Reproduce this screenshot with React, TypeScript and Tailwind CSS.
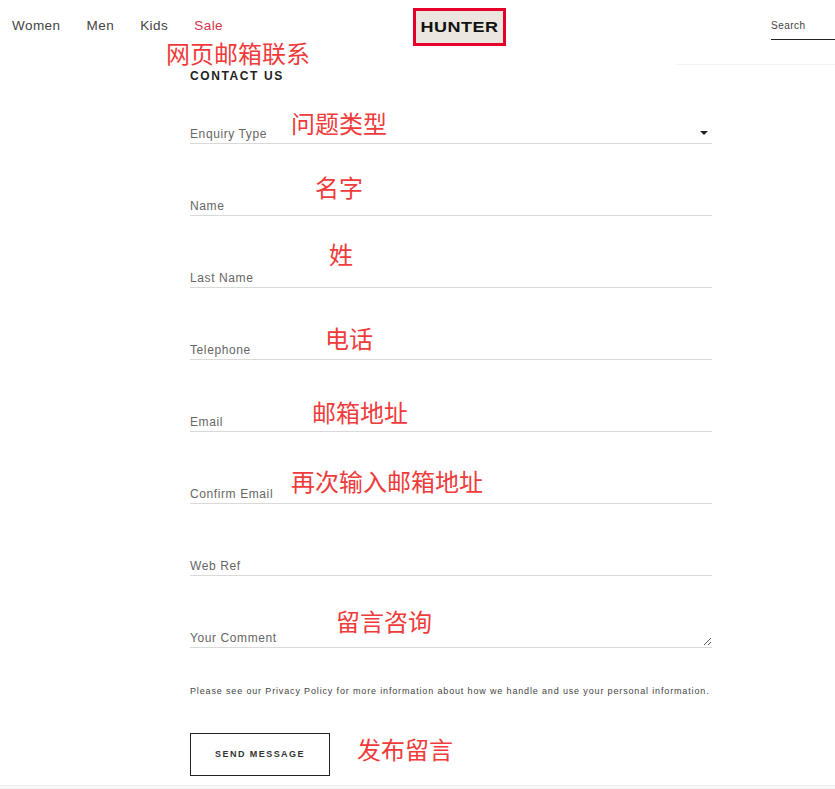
import React from 'react';

const fields = ['Enquiry Type', 'Name', 'Last Name', 'Telephone', 'Email', 'Confirm Email', 'Web Ref', 'Your Comment'];

const notes = [
  { text: '网页邮箱联系', cls: 'left-[166px] top-[39px]' },
  { text: '问题类型', cls: 'left-[291px] top-[109px]' },
  { text: '名字', cls: 'left-[315px] top-[173px]' },
  { text: '姓', cls: 'left-[329px] top-[240px]' },
  { text: '电话', cls: 'left-[325px] top-[324px]' },
  { text: '邮箱地址', cls: 'left-[312px] top-[398px]' },
  { text: '再次输入邮箱地址', cls: 'left-[291px] top-[467px]' },
  { text: '留言咨询', cls: 'left-[336px] top-[607px]' },
  { text: '发布留言', cls: 'left-[357px] top-[735px]' },
];

function Field({ label, index }: { label: string; index: number }) {
  return (
    <div className="relative flex h-[72px] items-end border-b border-[#d9d9d9] pb-[1px]">
      <span className="text-[12px] leading-[16px] tracking-[0.6px] text-[#666]">{label}</span>
      {index === 0 && (
        <div className="absolute right-[4px] bottom-[8px] h-0 w-0 border-x-[4px] border-t-[4px] border-x-transparent border-t-[#222]" />
      )}
      {index === 7 && (
        <svg className="absolute right-0 bottom-[1px]" width="9" height="9" viewBox="0 0 9 9">
          <path d="M1 8 8 1M5 8 8 5" stroke="#555" strokeWidth="1" fill="none" />
        </svg>
      )}
    </div>
  );
}

export default function App() {
  return (
    <div className="relative h-[789px] w-[835px] overflow-hidden bg-white font-['Liberation_Sans',sans-serif]">
      <header className="flex h-[64px] items-start justify-between">
        <nav className="flex gap-[26px] pt-[17px] pl-[12px] text-[13.5px] leading-[17px] tracking-[0.45px] text-[#444]">
          <a>Women</a>
          <a>Men</a>
          <a>Kids</a>
          <a className="text-[#d8334a]">Sale</a>
        </nav>
        <div className="ml-[18px] mt-[8px] flex h-[38px] w-[93px] items-center justify-center border-[3px] border-[#e4002b] bg-[#ebe6df]">
          <span className="text-[15px] font-bold tracking-[0.4px] text-[#111] [transform:scaleX(1.2)]">HUNTER</span>
        </div>
        <div className="flex h-[65px] w-[158px] flex-col items-end border-b border-[#f3f3f3]">
          <div className="mt-[14px] h-[26px] w-[64px] border-b border-[#222] pt-[5px] text-[10px] leading-[14px] tracking-[0.5px] text-[#444]">Search</div>
        </div>
      </header>

      <main className="ml-[190px] w-[522px]">
        <h1 className="mt-[5px] text-[12px] leading-[14px] font-bold tracking-[1.6px] text-[#222]">CONTACT US</h1>
        <div className="mt-[-11px]">
          {fields.map((f, i) => (
            <Field key={f} label={f} index={i} />
          ))}
        </div>
        <p className="mt-[37px] text-[9px] leading-[12px] tracking-[0.85px] whitespace-nowrap text-[#444]">
          Please see our Privacy Policy for more information about how we handle and use your personal information.
        </p>
        <button className="mt-[36px] h-[43px] w-[140px] border border-[#222] bg-white text-[9px] font-bold tracking-[1.45px] text-[#333]">
          SEND MESSAGE
        </button>
      </main>

      <div className="absolute bottom-0 left-0 h-[4px] w-full border-t border-[#eee] bg-[#f8f8f8]" />

      {notes.map((n) => (
        <span
          key={n.text}
          className={`absolute text-[24px] leading-[28px] whitespace-nowrap text-[#ef3b3b] font-['Noto_Sans_CJK_SC',sans-serif] ${n.cls}`}
        >
          {n.text}
        </span>
      ))}
    </div>
  );
}
